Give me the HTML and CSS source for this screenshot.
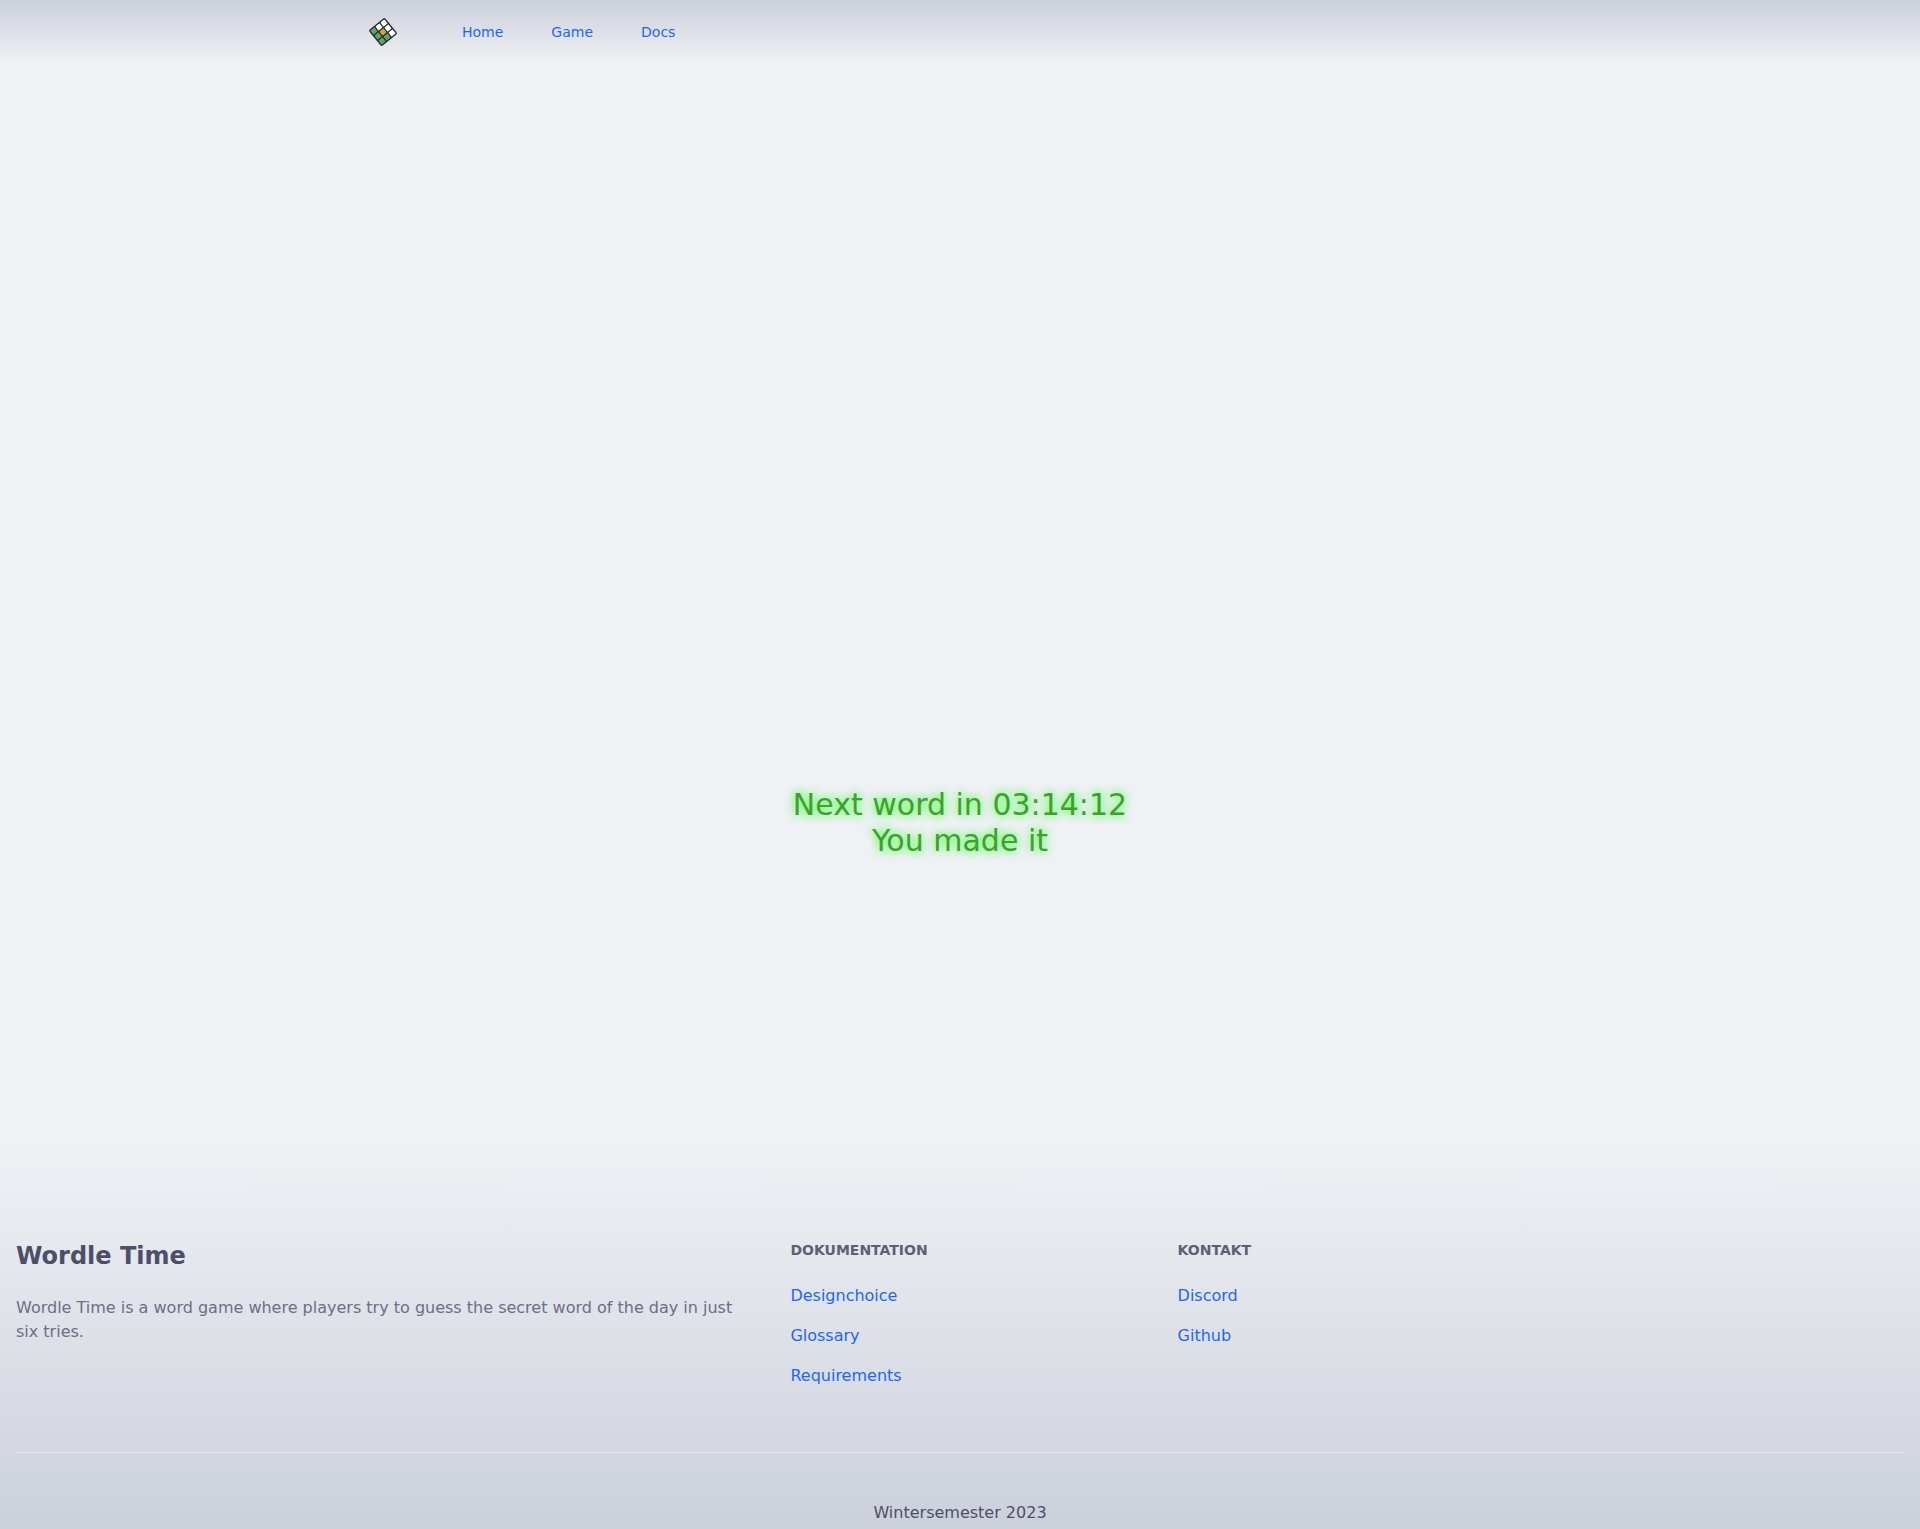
FILE: index.html
```html
<!DOCTYPE html>
<html lang="de">
<head>
<meta charset="utf-8">
<meta name="viewport" content="width=device-width, initial-scale=1">
<title>Wordle Time</title>
<link rel="stylesheet" href="styles.css">
</head>
<body>
<header class="header">
  <nav class="nav">
    <a class="logo" href="#" aria-label="Wordle Time">
      <svg viewBox="0 0 30 30" aria-hidden="true">
        <g transform="translate(15 15) rotate(-39)">
          <rect x="-10.4" y="-10.4" width="20.8" height="20.8" rx="2" fill="#24273a"/>
          <g fill="#fff">
            <rect x="-2.6" y="-9" width="5.2" height="5.2" rx=".6"/>
            <rect x="3.8" y="-9" width="5.2" height="5.2" rx=".6"/>
            <rect x="3.8" y="-2.6" width="5.2" height="5.2" rx=".6"/>
            <rect x="3.8" y="3.8" width="5.2" height="5.2" rx=".6"/>
          </g>
          <g fill="#60a561">
            <rect x="-9" y="-9" width="5.2" height="5.2" rx=".6"/>
            <rect x="-9" y="-2.6" width="5.2" height="5.2" rx=".6"/>
            <rect x="-9" y="3.8" width="5.2" height="5.2" rx=".6"/>
            <rect x="-2.6" y="3.8" width="5.2" height="5.2" rx=".6"/>
          </g>
          <rect x="-2.6" y="-2.6" width="5.2" height="5.2" rx=".6" fill="#d0a830"/>
        </g>
      </svg>
    </a>
    <ul class="nav-links">
      <li><a href="#">Home</a></li>
      <li><a href="#">Game</a></li>
      <li><a href="#">Docs</a></li>
    </ul>
  </nav>
</header>
<main class="main">
  <div class="result">
    <p>Next word in 03:14:12</p>
    <p>You made it</p>
  </div>
</main>
<footer class="footer">
  <div class="columns">
    <section class="about">
      <h2>Wordle Time</h2>
      <p>Wordle Time is a word game where players try to guess the secret word of the day in just six tries.</p>
    </section>
    <section class="links">
      <h3>Dokumentation</h3>
      <ul>
        <li><a href="#">Designchoice</a></li>
        <li><a href="#">Glossary</a></li>
        <li><a href="#">Requirements</a></li>
      </ul>
    </section>
    <section class="links">
      <h3>Kontakt</h3>
      <ul>
        <li><a href="#">Discord</a></li>
        <li><a href="#">Github</a></li>
      </ul>
    </section>
  </div>
  <p class="semester">Wintersemester 2023</p>
</footer>
</body>
</html>
```
FILE: styles.css
```css
*, *::before, *::after { box-sizing: border-box; }

body, h2, h3, p, ul { margin: 0; padding: 0; }

ul { list-style: none; }

a { color: #1e66f5; text-decoration: none; }

body {
  display: flex;
  flex-direction: column;
  min-height: 100vh;
  background: #eff1f5;
  color: #4c4f69;
  font: 16px/24px "DejaVu Sans", sans-serif;
}

.header { background: linear-gradient(to bottom, #ccd0da, #eff1f5); }

.nav {
  display: flex;
  align-items: center;
  gap: 64px;
  max-width: 1184px;
  height: 64px;
  margin: 0 auto;
}

.logo, .logo svg { display: block; width: 30px; height: 30px; }

.nav-links {
  display: flex;
  gap: 48px;
  font-size: 14px;
  line-height: 20px;
}

.main {
  flex: 1;
  display: grid;
  grid-template-rows: 33fr auto 13fr;
}

.result {
  grid-row: 2;
  color: #40a02b;
  font-size: 30px;
  line-height: 36px;
  text-align: center;
  text-shadow: 0 0 10px #55ff55, 0 0 10px #88ff88;
}

.footer {
  padding: 96px 16px 4px;
  background: linear-gradient(to top, #ccd0da, #eff1f5);
}

.columns {
  display: grid;
  grid-template-columns: repeat(5, 1fr);
  gap: 48px;
  padding-bottom: 64px;
  border-bottom: 1px solid #e5e7eb;
}

.about { grid-column: span 2; }

.about h2 { font-size: 24px; line-height: 32px; }

.about p { margin-top: 24px; color: #6c6f85; }

.links h3 {
  color: #5c5f77;
  font-size: 14px;
  line-height: 20px;
  text-transform: uppercase;
}

.links ul {
  display: grid;
  gap: 16px;
  margin-top: 24px;
}

.semester { margin-top: 48px; text-align: center; }
```
